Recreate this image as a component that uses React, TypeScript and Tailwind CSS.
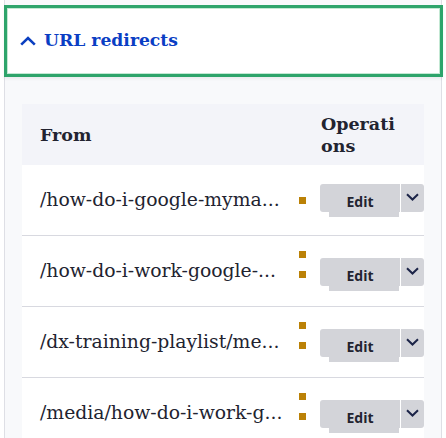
import type { ReactNode } from "react";

type Redirect = {
  from: string;
  flags: number;
};

const redirects: Redirect[] = [
  { from: "/how-do-i-google-myma...", flags: 1 },
  { from: "/how-do-i-work-google-...", flags: 2 },
  { from: "/dx-training-playlist/me...", flags: 2 },
  { from: "/media/how-do-i-work-g...", flags: 2 },
];

const serif = "font-['DejaVu_Serif',_'Liberation_Serif',_serif]";

function Flag() {
  return <span className="block h-[7px] w-[7px] bg-[#bb8106]" />;
}

function ChevronUp() {
  return (
    <svg width="16" height="10" viewBox="0 0 16 10" fill="none" className="shrink-0">
      <path d="M1.2 8.6 8 2l6.8 6.6" stroke="#0b3fc0" strokeWidth="2.6" />
    </svg>
  );
}

function ChevronDown() {
  return (
    <svg width="13" height="8" viewBox="0 0 13 8" fill="none">
      <path d="M1 1.2 6.5 6.5 12 1.2" stroke="#1c2448" strokeWidth="2" />
    </svg>
  );
}

function EditDropbutton() {
  return (
    <div className="flex flex-col">
      <div className="flex h-[28px]">
        <button className="h-[28px] w-[80px] rounded-l-[3px] bg-[#d3d4d9] pt-[8px] text-center font-['Open_Sans',_sans-serif] text-[14px] leading-[20px] font-bold text-[#222330]">
          Edit
        </button>
        <span className="w-px bg-white" />
        <button className="flex h-[28px] w-[23px] items-center justify-center rounded-r-[3px] bg-[#d3d4d9] pb-[2px]">
          <ChevronDown />
        </button>
      </div>
      <span className="ml-[9px] h-[5px] w-[70px] bg-[#d3d4d9]" />
    </div>
  );
}

function Row({ item }: { item: Redirect }) {
  return (
    <div className="flex h-[71px] items-center border-b border-[#d8d9e0] bg-white">
      <div className={`w-[277px] pl-[18px] text-[18.8px] text-[#222330] ${serif}`}>{item.from}</div>
      <div className="flex flex-col">
        {item.flags > 1 && <Flag />}
        <div className="flex items-start gap-[14px]">
          <span className="mt-[13px]">
            <Flag />
          </span>
          <EditDropbutton />
        </div>
      </div>
    </div>
  );
}

function HeaderCell({ children, className }: { children: ReactNode; className?: string }) {
  return <div className={`text-[17.5px] leading-[22px] font-bold text-[#222330] ${serif} ${className ?? ""}`}>{children}</div>;
}

export default function App() {
  return (
    <div className="h-[438px] w-[446px] overflow-hidden bg-white">
      <div className="ml-[4px] h-full w-[438px] border-x border-[#dedfe5] bg-[#f8f9fb] pt-[5px]">
        <div className="-ml-px flex h-[72px] w-[439px] items-center gap-[8px] border-[3px] border-[#2ea46b] bg-white pl-[13px] shadow-[inset_0_0_0_1px_#c3e8d3,0_2px_3px_rgba(0,0,0,0.06)]">
          <ChevronUp />
          <h2 className={`text-[17.2px] font-bold text-[#0a3ec4] ${serif}`}>URL redirects</h2>
        </div>

        <div className="px-[17px] pt-[27px]">
          <div className="flex h-[61px] items-center bg-[#f3f4f9]">
            <HeaderCell className="w-[299px] pl-[18px]">From</HeaderCell>
            <HeaderCell>
              Operati
              <br />
              ons
            </HeaderCell>
          </div>
          {redirects.map((r) => (
            <Row key={r.from} item={r} />
          ))}
        </div>
      </div>
    </div>
  );
}
